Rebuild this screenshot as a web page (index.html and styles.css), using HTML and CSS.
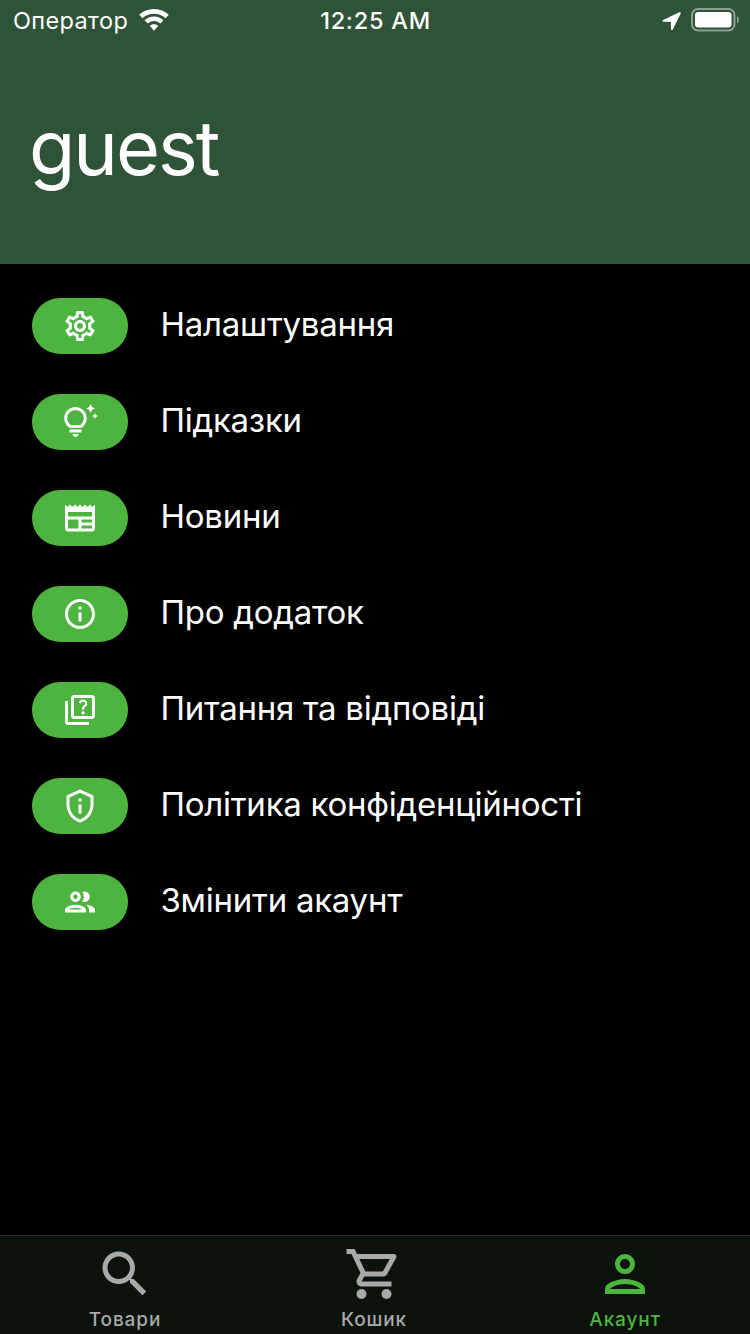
FILE: index.html
```html
<!DOCTYPE html>
<html lang="uk">
<head>
<meta charset="utf-8">
<title>Акаунт</title>
<link rel="stylesheet" href="styles.css">
</head>
<body>
<div class="screen">
  <header class="header">
    <div class="status">
      <div class="status-left">
        <span class="carrier">Оператор</span>
        <svg class="wifi" viewBox="0 0 30 22"><path d="M15 0C9.300 0 4.100 2.100.2 5.700L3.500 9.200C6.500 6.400 10.500 4.700 15 4.700s8.500 1.700 11.500 4.500l3.300-3.500C25.900 2.100 20.700 0 15 0z"/><path d="M15 7.600c-3.700 0-7 1.400-9.500 3.700l3.200 3.300c1.700-1.500 3.900-2.500 6.300-2.500s4.600 1 6.300 2.500l3.200-3.300C22 9 18.700 7.600 15 7.600z"/><path d="M15 15.200c-1.700 0-3.200.6-4.300 1.600L15 21.700l4.300-4.900c-1.100-1-2.600-1.600-4.300-1.600z"/></svg>
      </div>
      <span class="time">12:25 AM</span>
      <div class="status-right">
        <svg class="location" viewBox="0 0 20 20"><path d="M17.300 1.300 1.200 8.900c-1.200.6-.8 1.800.4 1.800l7.300.2.100 7.100c0 1.300 1.300 1.500 1.800.4L18.700 2.600c.4-1-.4-1.700-1.400-1.300z"/></svg>
        <svg class="battery" viewBox="0 0 50 24"><rect class="battery-shell" x="1" y="1" width="42.500" height="21.500" rx="6"/><rect x="4" y="4" width="36.500" height="15.500" rx="3.300"/><path class="battery-cap" d="M46 8c2.700 1.400 2.700 6.100 0 7.500z"/></svg>
      </div>
    </div>
    <h1 class="user">guest</h1>
  </header>
  <ul class="menu">
    <li class="item"><span class="pill"><svg viewBox="0 0 24 24"><path d="M19.430 12.980c.04-.32.070-.64.070-.98 0-.34-.03-.66-.07-.98l2.110-1.650c.19-.15.240-.42.120-.64l-2-3.460c-.09-.16-.26-.25-.44-.25-.06 0-.12.010-.17.030l-2.490 1c-.52-.4-1.080-.73-1.690-.98l-.38-2.650C14.460 2.180 14.250 2 14 2h-4c-.25 0-.46.180-.49.420l-.38 2.650c-.61.250-1.170.590-1.690.980l-2.490-1c-.06-.02-.12-.03-.18-.03-.17 0-.34.090-.43.250l-2 3.460c-.13.220-.07.490.120.640l2.110 1.650c-.04.320-.07.650-.07.980 0 .330.030.660.070.980l-2.110 1.650c-.19.150-.24.420-.12.640l2 3.460c.09.160.260.250.440.250.06 0 .120-.01.170-.03l2.490-1c.52.400 1.080.730 1.690.980l.38 2.650c.03.240.240.420.490.420h4c.25 0 .460-.18.490-.42l.38-2.650c.61-.25 1.170-.59 1.690-.98l2.490 1c.06.020.120.030.180.030.17 0 .340-.09.430-.25l2-3.460c.12-.22.070-.49-.12-.64l-2.110-1.650zm-1.980-1.710c.04.310.050.520.050.730 0 .210-.02.430-.05.730l-.14 1.130.89.700 1.080.840-.7 1.210-1.270-.51-1.040-.42-.9.680c-.43.320-.84.560-1.250.730l-1.060.430-.16 1.130-.2 1.350h-1.400l-.19-1.350-.16-1.130-1.060-.43c-.43-.18-.83-.41-1.230-.71l-.91-.7-1.060.430-1.270.510-.7-1.210 1.080-.84.890-.7-.14-1.130c-.03-.31-.05-.54-.05-.74s.02-.43.050-.73l.14-1.130-.89-.7-1.080-.84.700-1.210 1.270.510 1.040.420.900-.68c.43-.32.840-.56 1.250-.73l1.060-.43.160-1.130.2-1.350h1.390l.19 1.350.16 1.130 1.060.430c.43.180.83.410 1.230.710l.91.700 1.060-.43 1.270-.51.700 1.210-1.070.850-.89.700.14 1.130zM12 8c-2.210 0-4 1.790-4 4s1.790 4 4 4 4-1.790 4-4-1.790-4-4-4zm0 6c-1.100 0-2-.9-2-2s.9-2 2-2 2 .9 2 2-.9 2-2 2z"/></svg></span><span class="label">Налаштування</span></li>
    <li class="item"><span class="pill"><svg viewBox="0 0 24 24"><path d="M7 20h4c0 1.100-.9 2-2 2s-2-.9-2-2zm-2-1h8v-2H5v2zm11.500-9.500c0 3.820-2.660 5.860-3.770 6.500H5.270c-1.110-.64-3.770-2.680-3.770-6.500C1.500 5.360 4.860 2 9 2s7.500 3.360 7.500 7.500zm-2 0C14.500 6.470 12.030 4 9 4S3.500 6.470 3.500 9.500c0 2.470 1.490 3.890 2.350 4.500h6.300c.86-.61 2.350-2.030 2.350-4.500zm6.870-2.130L20 8l1.370.63L22 10l.63-1.370L24 8l-1.370-.63L22 6l-.63 1.370zM19 6l.94-2.060L22 3l-2.060-.94L19 0l-.94 2.060L16 3l2.060.94L19 6z"/></svg></span><span class="label">Підказки</span></li>
    <li class="item"><span class="pill"><svg viewBox="0 0 24 24"><path d="M22 3l-1.670 1.670L18.670 3 17 4.670 15.330 3l-1.660 1.670L12 3l-1.670 1.670L8.670 3 7 4.670 5.330 3 3.670 4.670 2 3v16c0 1.100.9 2 2 2h16c1.100 0 2-.9 2-2V3zM11 19H4v-6h7v6zm9 0h-7v-2h7v2zm0-4h-7v-2h7v2zm0-4H4V8h16v3z"/></svg></span><span class="label">Новини</span></li>
    <li class="item"><span class="pill"><svg viewBox="0 0 24 24"><path d="M11 7h2v2h-2zm0 4h2v6h-2zm1-9C6.480 2 2 6.480 2 12s4.480 10 10 10 10-4.480 10-10S17.520 2 12 2zm0 18c-4.410 0-8-3.590-8-8s3.590-8 8-8 8 3.590 8 8-3.590 8-8 8z"/></svg></span><span class="label">Про додаток</span></li>
    <li class="item"><span class="pill"><svg viewBox="0 0 24 24"><path d="M4 6H2v14c0 1.100.9 2 2 2h14v-2H4V6zM20 2H8c-1.100 0-2 .9-2 2v12c0 1.100.9 2 2 2h12c1.100 0 2-.9 2-2V4c0-1.100-.9-2-2-2zm0 14H8V4h12v12zM13.510 10.160c.41-.73 1.180-1.160 1.630-1.800.48-.68.21-1.940-1.140-1.940-.88 0-1.320.67-1.500 1.230l-1.370-.57C11.510 5.960 12.520 5 13.990 5c1.230 0 2.080.56 2.510 1.260.37.6.58 1.730.01 2.570-.63.93-1.230 1.210-1.560 1.810-.13.24-.18.4-.18 1.180h-1.520c.01-.41-.06-1.080.26-1.660zm-.56 3.790c0-.59.47-1.040 1.050-1.040.59 0 1.040.45 1.040 1.040 0 .58-.44 1.050-1.040 1.050-.58 0-1.050-.47-1.050-1.050z"/></svg></span><span class="label">Питання та відповіді</span></li>
    <li class="item"><span class="pill"><svg viewBox="0 0 24 24"><path fill-rule="evenodd" d="M12 3.190l7 3.110V11c0 4.520-2.980 8.690-7 9.930-4.020-1.240-7-5.410-7-9.930V6.300l7-3.110M12 1 3 5v6c0 5.550 3.840 10.740 9 12 5.160-1.260 9-6.450 9-12V5l-9-4zm-1 6h2v2h-2V7zm0 4h2v6h-2v-6z"/></svg></span><span class="label">Політика конфіденційності</span></li>
    <li class="item"><span class="pill"><svg viewBox="0 0 24 24"><path d="M9 13.750c-2.340 0-7 1.170-7 3.500V19h14v-1.750c0-2.330-4.660-3.500-7-3.500zM4.340 17c.84-.58 2.870-1.250 4.660-1.250s3.820.67 4.660 1.250H4.340zM9 12c1.930 0 3.500-1.570 3.500-3.500S10.930 5 9 5 5.500 6.570 5.500 8.500 7.070 12 9 12zm0-5c.83 0 1.500.67 1.500 1.500S9.830 10 9 10s-1.500-.67-1.500-1.500S8.170 7 9 7zm7.040 6.810c1.160.84 1.960 1.960 1.960 3.440V19h4v-1.750c0-2.020-3.500-3.170-5.960-3.440zM15 12c1.930 0 3.500-1.570 3.500-3.500S16.930 5 15 5c-.54 0-1.040.13-1.500.35.63.89 1 1.980 1 3.150s-.37 2.260-1 3.150c.46.22.96.35 1.500.35z"/></svg></span><span class="label">Змінити акаунт</span></li>
  </ul>
  <nav class="tabs">
    <div class="tab"><svg viewBox="0 0 24 24"><path d="M15.500 14h-.79l-.28-.27C15.410 12.590 16 11.110 16 9.500 16 5.910 13.090 3 9.500 3S3 5.910 3 9.500 5.910 16 9.500 16c1.610 0 3.090-.59 4.230-1.570l.27.28v.79l5 4.990L20.490 19l-4.990-5zm-6 0C7.010 14 5 11.990 5 9.500S7.010 5 9.500 5 14 7.010 14 9.500 11.990 14 9.500 14z"/></svg><span>Товари</span></div>
    <div class="tab cart"><svg viewBox="0 0 24 24"><path d="M15.550 13c.75 0 1.410-.41 1.750-1.030l3.580-6.490c.37-.66-.11-1.480-.87-1.480H5.210l-.94-2H1v2h2l3.600 7.590-1.350 2.440C4.520 15.370 5.480 17 7 17h12v-2H7l1.100-2h7.450zM6.160 6h12.150l-2.760 5H8.530L6.160 6z"/><circle cx="7" cy="20" r="2"/><circle cx="17" cy="20" r="2"/></svg><span>Кошик</span></div>
    <div class="tab active"><svg viewBox="0 0 24 24"><path fill-rule="evenodd" d="M12 6c1.100 0 2 .9 2 2s-.9 2-2 2-2-.9-2-2 .9-2 2-2m0 10c2.700 0 5.800 1.290 6 2H6c.23-.72 3.310-2 6-2m0-12C9.790 4 8 5.790 8 8s1.790 4 4 4 4-1.790 4-4-1.790-4-4-4zm0 10c-2.670 0-8 1.340-8 4v2h16v-2c0-2.660-5.330-4-8-4z"/></svg><span>Акаунт</span></div>
  </nav>
</div>
</body>
</html>
```
FILE: styles.css
```css
* { box-sizing: border-box; margin: 0; padding: 0; }
body {
  background: #000;
  color: #fff;
  font-family: Inter, "Liberation Sans", sans-serif;
}
svg { display: block; fill: currentColor; flex: none; }
.screen {
  width: 750px;
  height: 1334px;
  display: flex;
  flex-direction: column;
  overflow: hidden;
}
.header { height: 264px; background: #2f5337; }
.status {
  height: 40px;
  display: grid;
  grid-template-columns: 1fr auto 1fr;
  align-items: center;
  padding: 0 9px 0 13px;
  line-height: 38px;
}
.status-left { display: flex; align-items: center; gap: 11px; }
.carrier { font-size: 23.5px; letter-spacing: 0.35px; padding-top: 2px; }
.wifi { width: 30px; height: 22px; }
.time { font-size: 23.5px; font-weight: 500; letter-spacing: 0.75px; padding-top: 2px; margin-left: -3px; }
.status-right { display: flex; justify-content: flex-end; align-items: center; gap: 9px; }
.location { width: 20px; height: 20px; margin-top: 1px; }
.battery { width: 50px; height: 24px; }
.battery-shell { fill: none; stroke: currentColor; stroke-width: 2; opacity: 0.45; }
.battery-cap { opacity: 0.45; }
.user {
  padding: 60px 0 0 29px;
  font-size: 75.5px;
  font-weight: 400;
  line-height: 96px;
  letter-spacing: -2px;
}
.menu {
  flex: 1;
  list-style: none;
  padding-top: 14px;
}
.item {
  height: 96px;
  display: flex;
  align-items: center;
  gap: 32px;
  padding-left: 32px;
}
.pill {
  width: 96px;
  height: 56px;
  border-radius: 28px;
  background: #4db440;
  display: flex;
  align-items: center;
  justify-content: center;
}
.pill svg { width: 36px; height: 36px; }
.label { font-size: 33px; line-height: 40px; letter-spacing: -0.26px; padding: 0 0 5px 0.5px; white-space: nowrap; }
.tabs {
  height: 99px;
  display: grid;
  grid-template-columns: repeat(3, 1fr);
  background: #0b130c;
  border-top: 1px solid #2a2c2a;
  color: #a9a9a9;
}
.tab {
  display: flex;
  flex-direction: column;
  align-items: center;
  padding-top: 8px;
  font-size: 19px;
  font-weight: 500;
  line-height: 32px;
  letter-spacing: 0.9px;
}
.tab svg { width: 60px; height: 60px; }
.cart { padding-right: 2px; }
.active { color: #4db440; }
```
